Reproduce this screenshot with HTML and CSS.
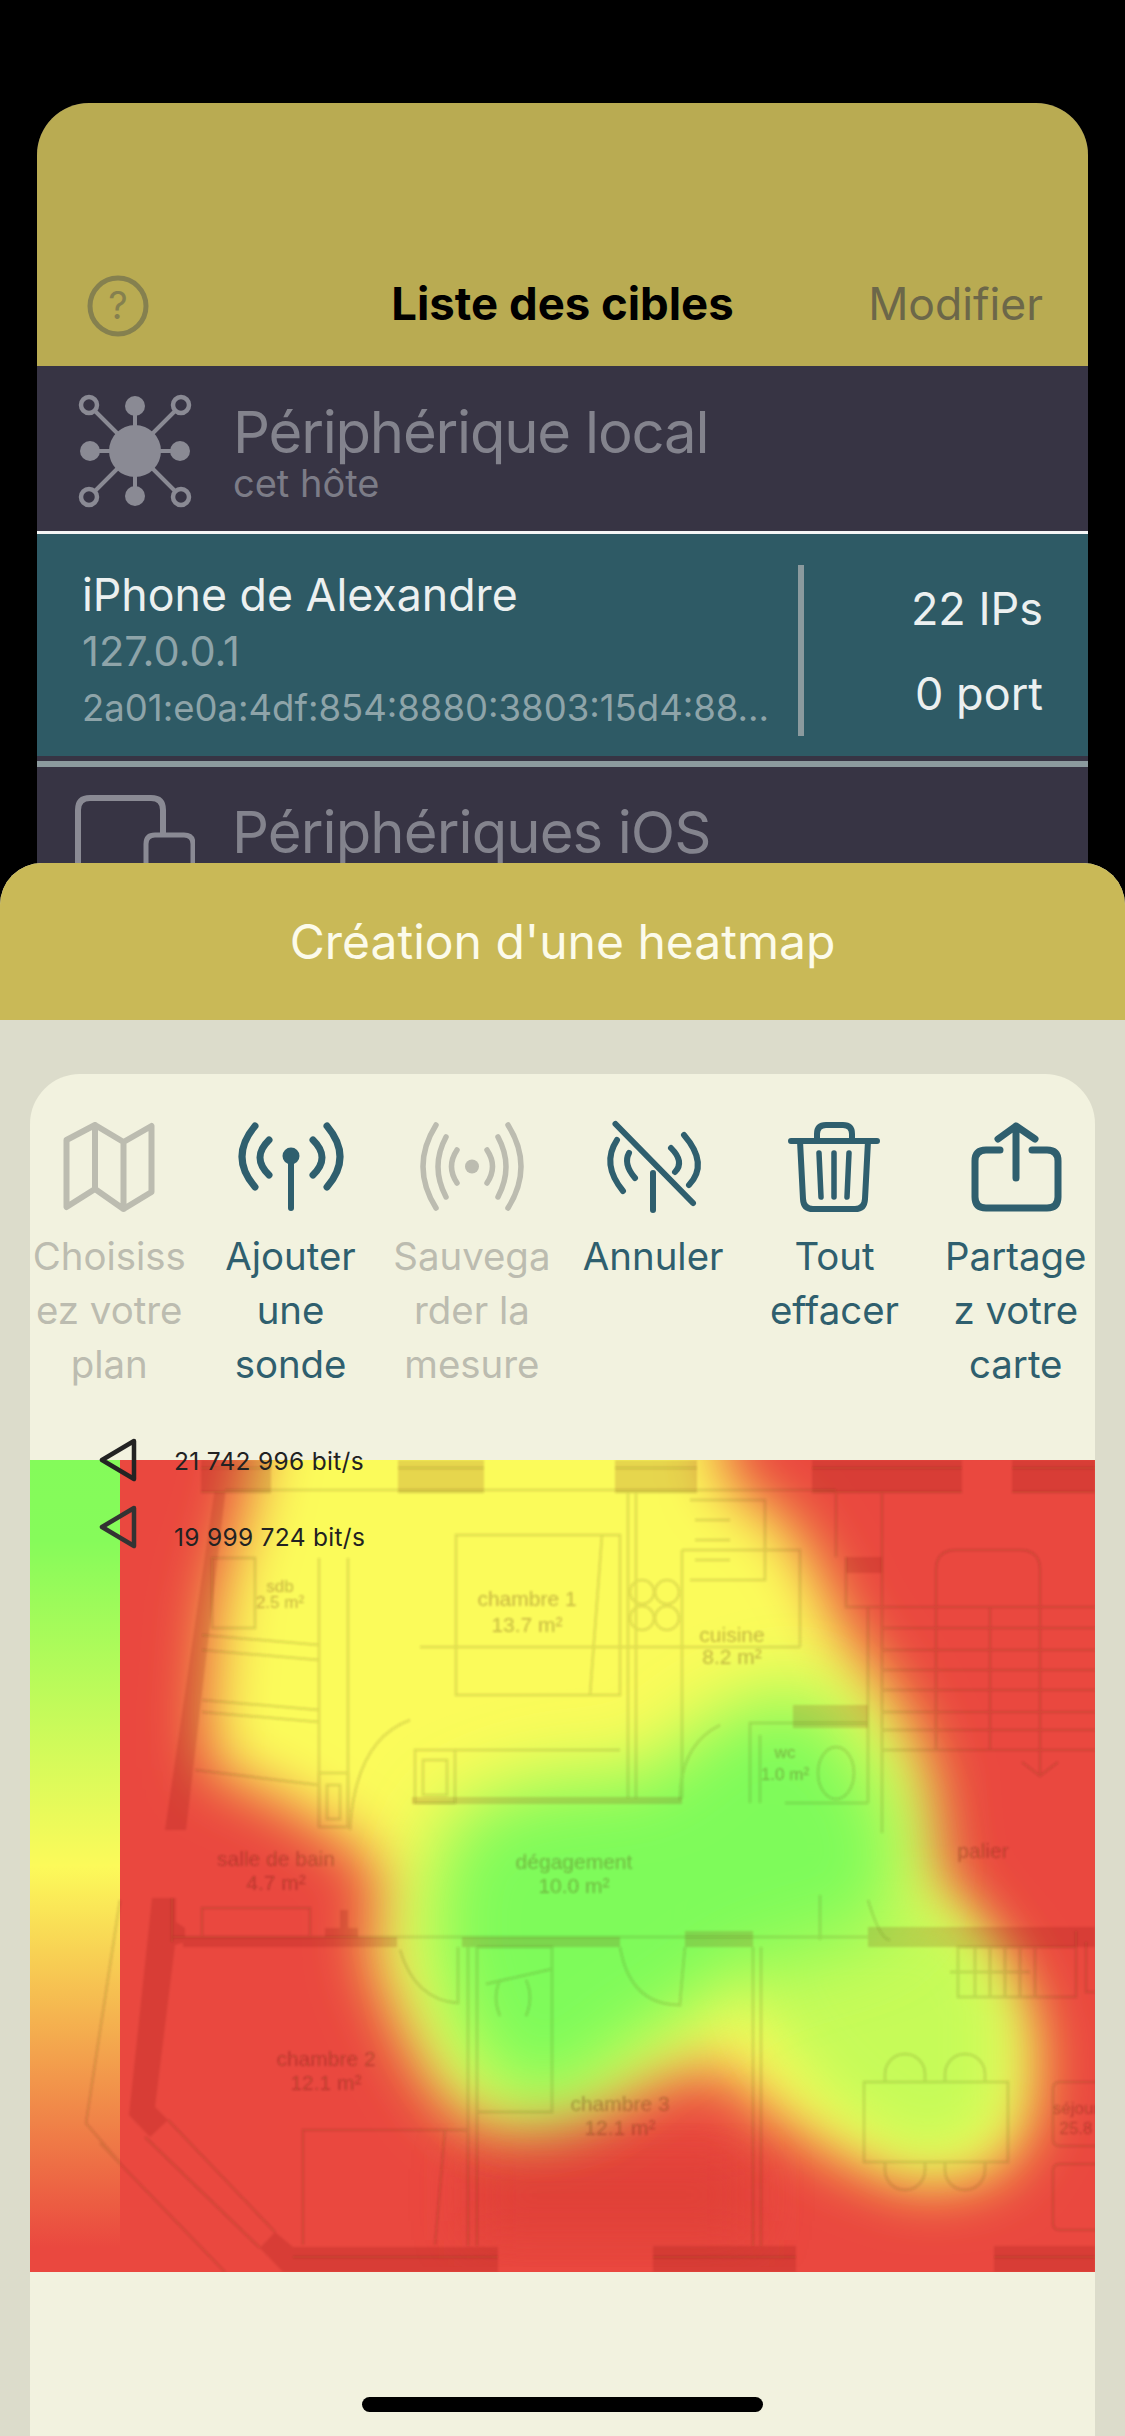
FILE: index.html
```html
<!DOCTYPE html>
<html lang="fr">
<head>
<meta charset="utf-8">
<title>Création d'une heatmap</title>
<link rel="stylesheet" href="styles.css">
</head>
<body>
<div class="screen">
  <section class="targets">
    <header class="nav">
      <div class="nav-side">
        <svg class="help" viewBox="0 0 62 62"><circle cx="31" cy="31" r="28" /><text x="31" y="44">?</text></svg>
      </div>
      <h1 class="nav-title">Liste des cibles</h1>
      <div class="nav-side nav-right"><span class="nav-edit">Modifier</span></div>
    </header>
    <div class="group-row local">
      <svg class="net-icon" viewBox="0 0 114 114">
        <g class="net-lines"><path d="M57 57L11 11M57 57L103 11M57 57L11 103M57 57L103 103M57 57V12M57 57V102M57 57H12M57 57H102"/></g>
        <circle class="net-fill" cx="57" cy="57" r="26"/>
        <circle class="net-fill" cx="57" cy="12" r="10"/><circle class="net-fill" cx="57" cy="102" r="10"/>
        <circle class="net-fill" cx="12" cy="57" r="10"/><circle class="net-fill" cx="102" cy="57" r="10"/>
        <circle class="net-ring" cx="11" cy="11" r="8"/><circle class="net-ring" cx="103" cy="11" r="8"/>
        <circle class="net-ring" cx="11" cy="103" r="8"/><circle class="net-ring" cx="103" cy="103" r="8"/>
      </svg>
      <div class="group-text">
        <div class="group-title">Périphérique local</div>
        <div class="group-sub">cet hôte</div>
      </div>
    </div>
    <div class="target-row">
      <div class="target-info">
        <div class="target-name">iPhone de Alexandre</div>
        <div class="target-ip">127.0.0.1</div>
        <div class="target-ip6">2a01:e0a:4df:854:8880:3803:15d4:88...</div>
      </div>
      <div class="target-stats">
        <div>22 IPs</div>
        <div>0 port</div>
      </div>
    </div>
    <div class="group-row ios">
      <svg class="ios-icon" viewBox="0 0 120 80">
        <path class="ios-big" d="M3 80V15Q3 3 15 3H76Q88 3 88 15V42"/>
        <path class="ios-small" d="M71 80V49Q71 40 80 40H109Q118 40 118 49V80"/>
      </svg>
      <div class="group-title">Périphériques iOS</div>
    </div>
  </section>

  <section class="sheet">
    <div class="sheet-head">Création d'une heatmap</div>
    <div class="sheet-body">
      <div class="card">
        <div class="tools">
          <div class="tool off">
            <svg viewBox="0 0 100 90"><path d="M7.5 18L36 3L64.5 20L92.5 4V70L64.5 87L36 67L7.5 85ZM36 3V67M64.5 20V87"/></svg>
            <span>Choisiss<br>ez votre<br>plan</span>
          </div>
          <div class="tool">
            <svg viewBox="0 0 100 90"><path d="M50 40V86"/><circle class="dot" cx="50" cy="34" r="8.5"/><path class="thick" d="M14 4Q-12 35 14 65M86 4Q112 35 86 65"/><path class="thick" d="M28 18Q10 35.500 28 53M72 18Q90 35.500 72 53"/></svg>
            <span>Ajouter<br>une<br>sonde</span>
          </div>
          <div class="tool off">
            <svg viewBox="0 0 100 90"><circle class="dot" cx="50" cy="44.500" r="7"/><path class="thin" d="M35 28Q24 44.500 35 61M65 28Q76 44.500 65 61M24 15Q8 44.500 24 75M76 15Q92 44.500 76 75M14 3Q-12 44.500 14 86M86 3Q112 44.500 86 86"/></svg>
            <span>Sauvega<br>rder la<br>mesure</span>
          </div>
          <div class="tool">
            <svg viewBox="0 0 100 90"><path d="M12.500 2L90 81M50 51V88M14 18Q-2 42 20 69M26 31Q20 42 32 56M81 13Q106 42 86 63M68 26Q82 40 72 50"/></svg>
            <span>Annuler</span>
          </div>
          <div class="tool">
            <svg viewBox="0 0 100 90"><path d="M7 19H93M33 18V12Q33 3 42 3H59Q68 3 68 12V18M16 19L19 77Q19.500 87 29 87H71Q80.500 87 81 77L84 19"/><path class="thin" d="M35 31L37 75M50 31V75M65 31L63 75"/></svg>
            <span>Tout<br>effacer</span>
          </div>
          <div class="tool">
            <svg viewBox="0 0 100 90"><path class="thick" d="M50 4V56M32 17L50 4L69 17M34 28H20Q9 28 9 39V75Q9 86 20 86H81Q92 86 92 75V39Q92 28 81 28H66"/></svg>
            <span>Partage<br>z votre<br>carte</span>
          </div>
        </div>
        <div class="map">
          <svg class="heat" viewBox="0 0 1065 812">
            <defs>
              <linearGradient id="legend" x1="0" y1="0" x2="0" y2="1">
                <stop offset="0" stop-color="#84fb5a"/>
                <stop offset="0.1" stop-color="#86fb5a"/>
                <stop offset="0.5" stop-color="#fcfa5a"/>
                <stop offset="0.97" stop-color="#ea483f"/>
              </linearGradient>
              <filter id="b1" x="-20%" y="-20%" width="140%" height="140%"><feGaussianBlur stdDeviation="30"/></filter>
              <filter id="b2" x="-30%" y="-30%" width="160%" height="160%"><feGaussianBlur stdDeviation="28"/></filter>
              <filter id="b3" x="-30%" y="-30%" width="160%" height="160%"><feGaussianBlur stdDeviation="38"/></filter>
              <filter id="soft" x="-5%" y="-5%" width="110%" height="110%"><feGaussianBlur stdDeviation="1.300"/></filter>
            </defs>
            <rect class="red" width="1065" height="812"/>
            <rect class="red-deep" x="440" y="690" width="283" height="90" filter="url(#b2)"/>
            <polygon class="yellow" filter="url(#b1)" points="240,-80 690,-80 695,23 752,57 785,107 815,173 865,240 898,307 905,407 928,450 978,509 1008,576 1002,662 965,716 890,728 809,698 735,650 690,605 640,615 560,650 470,668 425,650 393,608 360,543 337,484 357,433 329,390 250,340 178,307 178,240 186,140 216,40"/>
            <polygon class="lime" filter="url(#b2)" points="700,450 930,450 975,530 975,645 945,686 880,698 800,645 740,575"/>
            <polygon class="green" filter="url(#b3)" points="775,225 830,285 866,340 880,407 860,470 720,510 670,548 590,600 535,650 470,640 420,570 395,470 405,400 430,350 520,320 620,315 680,260"/>
            <rect x="0" y="0" width="90" height="812" fill="url(#legend)"/>
            <g class="plan" filter="url(#soft)">
              <g class="wall">
                <rect x="171" y="0" width="70" height="32"/><rect x="368" y="0" width="86" height="32"/><rect x="585" y="0" width="82" height="32"/><rect x="782" y="0" width="150" height="32"/><rect x="982" y="0" width="83" height="32"/>
                <rect x="153" y="477" width="214" height="10"/><rect x="432" y="477" width="158" height="10"/><rect x="655" y="471" width="68" height="16"/><rect x="838" y="467" width="227" height="20"/>
                <rect x="295" y="468" width="33" height="17"/><rect x="310" y="450" width="8" height="18"/>
                <polygon points="230,788 245,772 263,787 468,787 468,812 253,812"/><rect x="623" y="786" width="143" height="26"/><rect x="964" y="786" width="101" height="26"/>
                <rect x="382" y="337" width="270" height="7"/><rect x="763" y="245" width="75" height="23"/><rect x="816" y="97" width="36" height="16"/>
                <polygon points="185,27 196,27 156,370 135,370"/><polygon points="122,438 146,438 146,462 155,468 155,482 145,485 125,647 138,660 120,677 99,655"/>
              </g>
              <g class="line">
                <path d="M171 8H241M368 8H454M585 8H667M782 8H932M982 8H1065M171 32H241M368 32H454M585 32H667M782 32H932M982 32H1065"/>
                <path d="M195 30H806M806 33V97M816 97V147H852M852 33V373M838 147V343M598 30V338M606 30V338"/>
                <path d="M138 660L245 772M115 677L230 788M70 683L195 812M90 440L56 663L90 703M142 438V482"/>
                <path d="M852 147H1065M852 168H1065M852 190H1065M852 210H1065M852 230H1065M852 252H1065M852 270H1065M852 290H1065"/>
                <path d="M906 290V110Q906 90 926 90H990Q1010 90 1010 110V290M960 147V290M992 302L1010 316L1028 302M1010 290V316"/>
                <path d="M426 75H590V235H426ZM572 75L560 235M652 90V338"/>
                <rect x="182" y="98" width="43" height="70"/><path d="M289 98V367M318 98V367M172 175L289 185M172 190L289 200M172 240L289 250M172 252L289 262M165 310L289 325"/>
                <rect x="289" y="313" width="29" height="54"/><rect x="297" y="325" width="13" height="34"/>
                <rect x="385" y="290" width="40" height="53"/><rect x="393" y="300" width="24" height="35"/><path d="M425 290H590"/>
                <circle cx="612" cy="132" r="12"/><circle cx="637" cy="132" r="12"/><circle cx="612" cy="158" r="12"/><circle cx="637" cy="158" r="12"/>
                <path d="M660 40H735V120H660M665 60H700M665 80H700M665 100H700M652 90H770V187M390 187H770"/>
                <path d="M720 343V263H838M730 343V275M755 343H838"/><ellipse cx="806" cy="313" rx="18" ry="26"/>
                <path d="M380 260Q325 280 320 370M690 265Q650 285 650 340M790 435V480"/>
                <path d="M172 448H280V477H172ZM370 490Q385 540 428 543V487M655 487Q650 540 650 545Q600 545 590 487M838 440Q850 480 860 480"/>
                <path d="M438 487V786M447 487V786M723 487V786M731 487V786M447 487H522V652H447M456 524L522 509"/>
                <path d="M470 520Q462 537 470 556M496 520Q504 537 496 556"/>
                <path d="M928 487H1046V537H928ZM945 487V537M960 487V537M975 487V537M990 487V537M1005 487V537M920 512H1000M1046 471V537M1056 482V532H1065"/>
                <rect x="834" y="622" width="144" height="80"/>
                <path d="M855 622V614A20 20 0 0 1 895 614V622M915 622V614A20 20 0 0 1 955 614V622M855 702V710A20 20 0 0 0 895 710V702M915 702V710A20 20 0 0 0 955 710V702"/>
                <rect x="1023" y="622" width="60" height="64" rx="6"/><rect x="1023" y="704" width="60" height="66" rx="6"/>
                <path d="M273 785V670H438M415 670L405 785M263 797H468M623 797H766M964 797H1065M142 477H838"/>
              </g>
              <g class="room">
                <text x="497" y="146">chambre 1</text><text x="497" y="172">13.7 m²</text>
                <text x="702" y="182">cuisine</text><text x="702" y="204">8.2 m²</text>
                <text x="755" y="298" class="small">wc</text><text x="755" y="320" class="small">1.0 m²</text>
                <text x="250" y="132" class="small">sdb</text><text x="250" y="148" class="small">2.5 m²</text>
                <text x="246" y="406">salle de bain</text><text x="246" y="430">4.7 m²</text>
                <text x="544" y="409">dégagement</text><text x="544" y="433">10.0 m²</text>
                <text x="953" y="398">palier</text>
                <text x="296" y="606">chambre 2</text><text x="296" y="630">12.1 m²</text>
                <text x="590" y="651">chambre 3</text><text x="590" y="675">12.1 m²</text>
                <text x="1046" y="654" class="small">séjour</text><text x="1046" y="674" class="small">25.8</text>
              </g>
            </g>
          </svg>
          <svg class="marker marker-a" viewBox="0 0 40 44"><path d="M36 3L4 22L36 41Z"/></svg>
          <span class="bits bits-a">21 742 996 bit/s</span>
          <svg class="marker marker-b" viewBox="0 0 40 44"><path d="M36 3L4 22L36 41Z"/></svg>
          <span class="bits bits-b">19 999 724 bit/s</span>
        </div>
      </div>
    </div>
  </section>
  <div class="home-bar"></div>
</div>
</body>
</html>
```
FILE: styles.css
```css
* { box-sizing: border-box; }
html, body { margin: 0; padding: 0; background: #000; }
body { font-family: Inter, "Liberation Sans", sans-serif; }
.screen { position: relative; width: 1125px; height: 2436px; overflow: hidden; background: #000; padding: 103px 37px 0; }

.targets { height: 860px; border-radius: 52px 52px 0 0; overflow: hidden; background: #373444; }
.nav { height: 263px; background: #b9ab52; display: flex; align-items: flex-end; padding: 0 45px 30px 45px; }
.nav-side { flex: 1 0 0; display: flex; }
.nav-right { justify-content: flex-end; padding-bottom: 5px; }
.help { width: 62px; height: 62px; margin: 0 0 -1px 5px; fill: none; stroke: #85804f; stroke-width: 5; }
.help text { fill: #85804f; stroke: none; font-size: 38px; text-anchor: middle; }
.nav-title { margin: 0 0 5px; font-size: 45.500px; line-height: 54px; font-weight: 700; color: #000; white-space: nowrap; }
.nav-edit { font-size: 44.500px; line-height: 54px; color: #6c6749; }

.group-row { display: flex; align-items: flex-start; }
.local { height: 165px; padding: 28px 0 0 41px; gap: 41px; }
.net-icon { width: 114px; height: 114px; flex: none; }
.net-lines path { fill: none; stroke: #8a8a94; stroke-width: 4; }
.net-fill { fill: #8a8a94; }
.net-ring { fill: #373444; stroke: #8a8a94; stroke-width: 4.500; }
.group-title { font-size: 58px; line-height: 56px; letter-spacing: -1.200px; color: #83838d; white-space: nowrap; }
.group-text { padding-top: 10px; }
.group-sub { font-size: 38px; line-height: 46px; color: #7c7c87; }

.target-row { display: flex; height: 225px; background: #2e5a65; border-top: 3px solid #f4f5f5; padding: 31px 45px 0 45px; }
.target-info { width: 716px; flex: none; padding-top: 3px; }
.target-name { font-size: 44.700px; line-height: 54px; color: #ecf0f0; }
.target-ip { font-size: 41.500px; line-height: 50px; color: #8ea4a9; margin-top: 4px; }
.target-ip6 { font-size: 36.500px; line-height: 50px; color: #8ea4a9; margin-top: 7px; white-space: nowrap; }
.target-stats { flex: 1; height: 171px; border-left: 6px solid #8b9a9e; display: flex; flex-direction: column; align-items: flex-end; gap: 31px; font-size: 45px; line-height: 54px; color: #ecf0f0; padding-top: 17px; }
.ios { height: 140px; margin-top: 5px; border-top: 6px solid #8b9a9e; padding: 28px 0 0 38px; gap: 37px; }
.ios-icon { width: 120px; height: 80px; flex: none; fill: none; }
.ios-big { stroke: #8a8a94; stroke-width: 6; }
.ios-small { stroke: #8a8a94; stroke-width: 5; }
.ios .group-title { margin-top: 9px; letter-spacing: -.900px; }

.sheet { position: absolute; left: 0; right: 0; top: 863px; bottom: 0; background: #dcdccb; border-radius: 42px 42px 0 0; overflow: hidden; display: flex; flex-direction: column; }
.sheet-head { height: 157px; background: #c9b957; color: #fcfbea; font-size: 48px; text-align: center; line-height: 158px; }
.sheet-body { flex: 1; padding: 54px 30px 0; }
.card { height: 100%; background: #f2f2df; border-radius: 50px 50px 0 0; padding-top: 48px; }

.tools { display: flex; justify-content: center; gap: 16.300px; height: 338px; }
.tool { flex: none; width: 165px; display: flex; flex-direction: column; align-items: center; color: #2f5f6e; text-align: center; font-size: 38.400px; line-height: 54px; }
.tool svg { width: 100px; height: 90px; overflow: visible; fill: none; stroke: currentColor; stroke-width: 6; stroke-linecap: round; stroke-linejoin: round; margin-bottom: 17px; }
.tool .thick { stroke-width: 7; }
.tool .thin { stroke-width: 5.500; }
.tool .dot { fill: currentColor; stroke: none; }
.tool.off { color: #bcbcb0; }

.map { position: relative; height: 812px; }
.heat { display: block; width: 1065px; height: 812px; }
.red { fill: #ea483f; }
.red-deep { fill: #dc3c34; opacity: .7; }
.yellow { fill: #fbfb5a; }
.lime { fill: #c6fb58; }
.green { fill: #7efb5a; }
.plan .wall { fill: #6a1a08; opacity: .15; }
.plan .line { fill: none; stroke: #4a2a10; stroke-width: 2.500; opacity: .14; }
.plan .room { font-family: "Liberation Sans", sans-serif; font-size: 21px; text-anchor: middle; fill: #4a1f10; opacity: .3; }
.plan .room .small { font-size: 17px; }
.marker { position: absolute; left: 68px; width: 40px; height: 44px; fill: none; stroke: #232323; stroke-width: 4.500; stroke-linejoin: round; }
.marker-a { top: -22px; }
.marker-b { top: 45px; stroke: #333; }
.bits { position: absolute; left: 144px; font-size: 24.500px; letter-spacing: .3px; line-height: 28px; color: #222; white-space: nowrap; }
.bits-a { top: -13px; }
.bits-b { top: 63px; }

.home-bar { position: absolute; left: 362px; top: 2397px; width: 401px; height: 15px; border-radius: 7.500px; background: #000; }
```
